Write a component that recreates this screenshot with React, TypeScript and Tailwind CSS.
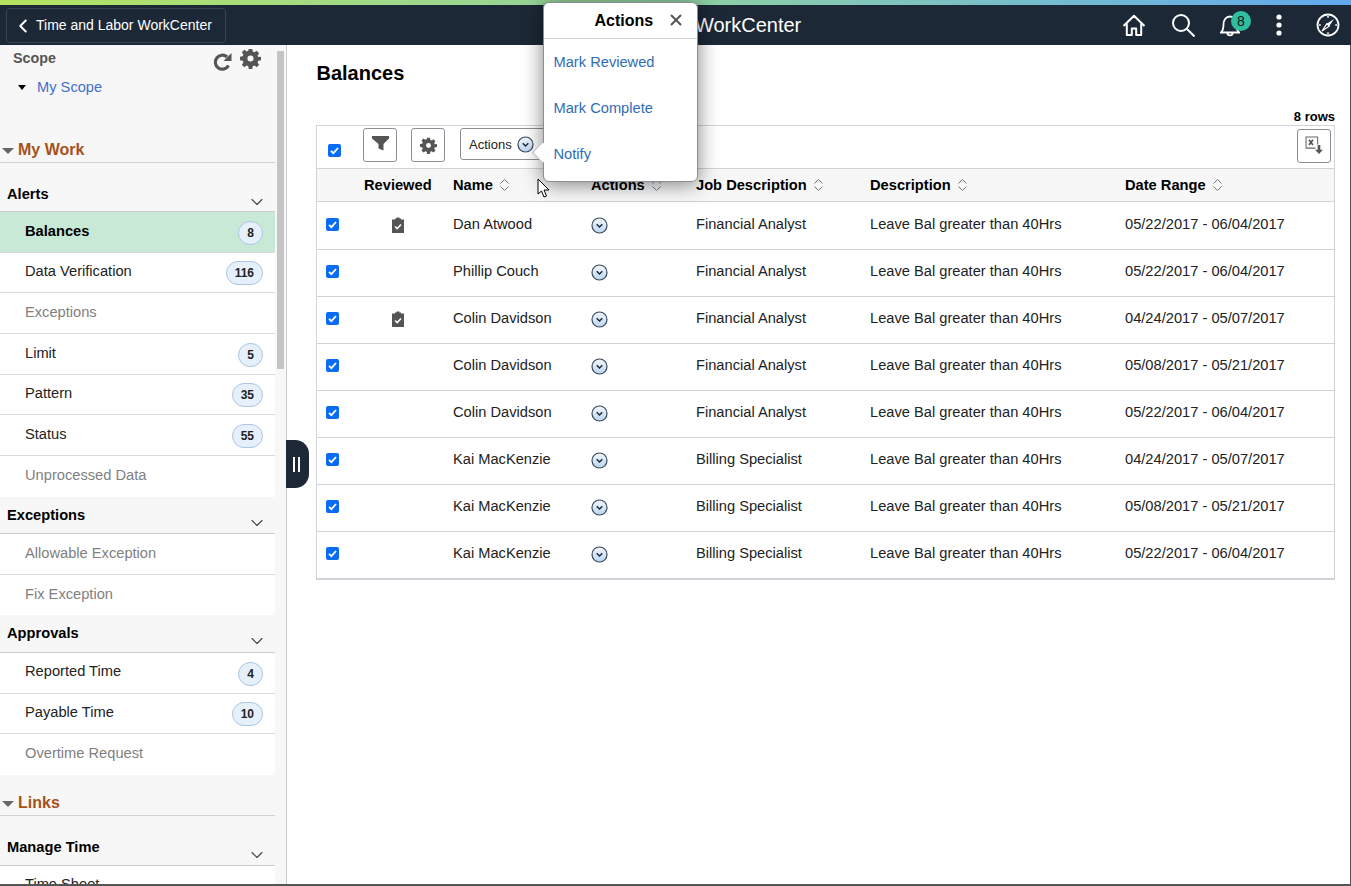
import { ChevronDown, ChevronLeft, X } from "lucide-react"

const font = "font-['Liberation_Sans',Arial,sans-serif]"

function Gear({ size = 20, color = "#555" }: { size?: number; color?: string }) {
  return (
    <svg width={size} height={size} viewBox="0 0 24 24">
      <path
        fill={color}
        fillRule="evenodd"
        d="M10 1h4l.6 3.100 1.900.8L19.100 3.100l2.800 2.800-1.800 2.600.8 1.900L24 10v4l-3.100.6-.8 1.900 1.800 2.600-2.800 2.800-2.600-1.800-1.900.8L14 24h-4l-.6-3.100-1.900-.8-2.600 1.800-2.800-2.800 1.800-2.600-.8-1.900L0 14v-4l3.100-.6.8-1.900-1.800-2.600L4.900 2.100l2.600 1.800 1.900-.8zM12 8.500a3.500 3.500 0 1 0 0 7 3.500 3.500 0 0 0 0-7z"
      />
    </svg>
  )
}

function ActionCircle() {
  return (
    <svg width="17" height="17" viewBox="0 0 17 17">
      <defs>
        <linearGradient id="ac" x1="0" y1="0" x2="0" y2="1">
          <stop offset="0" stopColor="#f4f8fd" />
          <stop offset="1" stopColor="#b9d5f2" />
        </linearGradient>
      </defs>
      <circle cx="8.500" cy="8.500" r="7.500" fill="url(#ac)" stroke="#3c4a5a" strokeWidth="1.200" />
      <path d="M5.700 7.300 8.500 10l2.800-2.700" fill="none" stroke="#1f2a36" strokeWidth="1.500" />
    </svg>
  )
}

function Check() {
  return (
    <span className="flex h-[13px] w-[13px] items-center justify-center rounded-[2px] bg-[#0a6cf5]">
      <svg width="11" height="11" viewBox="0 0 11 11">
        <path d="M2 5.800 4.400 8.200 9 3" fill="none" stroke="#fff" strokeWidth="1.800" />
      </svg>
    </span>
  )
}

function Sort() {
  return (
    <svg width="11" height="14" viewBox="0 0 11 14" className="ml-[6px]">
      <path d="M1.500 5.500 5.500 1.500l4 4M1.500 8.500l4 4 4-4" fill="none" stroke="#777" strokeWidth="1" />
    </svg>
  )
}

function Clipboard() {
  return (
    <svg width="14" height="16" viewBox="0 0 14 16">
      <path fill="#555" d="M1 2.500h3V1.500h1.500V.5h3v1H10v1h3V16H1z" />
      <path d="M4 9.500 6.200 11.600 10 7.400" fill="none" stroke="#fff" strokeWidth="1.500" />
    </svg>
  )
}

interface NavItem {
  label: string
  count?: string
  muted?: boolean
  active?: boolean
  last?: boolean
}

const alerts: NavItem[] = [
  { label: "Balances", count: "8", active: true },
  { label: "Data Verification", count: "116" },
  { label: "Exceptions", muted: true },
  { label: "Limit", count: "5" },
  { label: "Pattern", count: "35" },
  { label: "Status", count: "55" },
  { label: "Unprocessed Data", muted: true, last: true },
]
const exceptions: NavItem[] = [
  { label: "Allowable Exception", muted: true },
  { label: "Fix Exception", muted: true, last: true },
]
const approvals: NavItem[] = [
  { label: "Reported Time", count: "4" },
  { label: "Payable Time", count: "10" },
  { label: "Overtime Request", muted: true, last: true },
]

const rows = [
  ["Dan Atwood", "Financial Analyst", "05/22/2017 - 06/04/2017", true],
  ["Phillip Couch", "Financial Analyst", "05/22/2017 - 06/04/2017", false],
  ["Colin Davidson", "Financial Analyst", "04/24/2017 - 05/07/2017", true],
  ["Colin Davidson", "Financial Analyst", "05/08/2017 - 05/21/2017", false],
  ["Colin Davidson", "Financial Analyst", "05/22/2017 - 06/04/2017", false],
  ["Kai MacKenzie", "Billing Specialist", "04/24/2017 - 05/07/2017", false],
  ["Kai MacKenzie", "Billing Specialist", "05/08/2017 - 05/21/2017", false],
  ["Kai MacKenzie", "Billing Specialist", "05/22/2017 - 06/04/2017", false],
] as const

function Item({ item }: { item: NavItem }) {
  return (
    <div
      className={`flex h-[40.670px] items-center justify-between pl-[25px] pr-[12px] text-[14.670px] ${
        item.last ? "" : "border-b border-[#d8dbdf]"
      } ${item.active ? "bg-[#c8e9d6] font-bold text-black" : item.muted ? "bg-white text-[#7f7f7f]" : "bg-white text-[#222]"}`}
    >
      <span className="-mt-[2.500px]">{item.label}</span>
      {item.count && (
        <span className="mt-[2px] flex h-[24px] min-w-[25px] items-center justify-center rounded-full border border-[#a9c6e4] bg-[#e6f0fa] px-[8px] text-[12px] font-bold text-[#222]">
          {item.count}
        </span>
      )}
    </div>
  )
}

function GroupHeader({ label, className }: { label: string; className: string }) {
  return (
    <div className={`flex justify-between border-b border-[#c9cdd2] pl-[7px] pr-[8px] text-[14.670px] font-bold text-black ${className}`}>
      <span>{label}</span>
      <ChevronDown size={20} strokeWidth={1.300} className="mt-[9px] text-[#444]" />
    </div>
  )
}

function SectionTitle({ label }: { label: string }) {
  return (
    <div className="flex h-[25px] items-start border-b border-[#cfd3d8] pl-[2px] pt-[2px] text-[16px] font-bold leading-[20px] text-[#a5521b]">
      <span className="mr-[4px] mt-[8px] h-0 w-0 border-x-[6px] border-t-[6px] border-x-transparent border-t-[#666]" />
      {label}
    </div>
  )
}

export default function App() {
  return (
    <div className={`relative flex h-[886px] w-[1351px] flex-col overflow-hidden bg-white ${font}`}>
      <div className="h-[5px] bg-gradient-to-r from-[#b5e35f] via-[#8fd0a0] to-[#62a8ee]" />
      {/* banner */}
      <header className="relative flex h-[40px] items-center justify-between bg-[#1c2836] pl-[6px] pr-[11px] text-white">
        <button className="flex h-[35px] items-center rounded-[4px] border border-[#374554] pl-[7px] pr-[13px] pt-[1px] text-[14px]">
          <ChevronLeft size={22} strokeWidth={2.200} className="-ml-[2px] mr-[2px]" />
          Time and Labor WorkCenter
        </button>
        <div className="absolute left-[550px] top-[9px] text-[20px] leading-[23px]">Time and Labor WorkCenter</div>
        <div className="flex items-center">
          <svg width="24" height="24" viewBox="0 0 24 24" fill="none" stroke="#fff" strokeWidth="2" className="mr-[25px]">
            <path d="M1.500 13 12 2.800 22.500 13M4.800 10.500V22h5v-6.500h4.400V22h5V10.500" strokeLinejoin="round" />
          </svg>
          <svg width="24" height="24" viewBox="0 0 24 24" fill="none" stroke="#fff" strokeWidth="2" className="mr-[25px]">
            <circle cx="10" cy="10" r="8" />
            <path d="m16 16 7.500 7.500" />
          </svg>
          <div className="relative mr-[36px] h-[24px] w-[20px]">
            <svg width="20" height="24" viewBox="0 0 20 24" fill="none" stroke="#fff" strokeWidth="1.800">
              <path d="M1 19.500c2-2 2.500-4 2.500-8 0-4.500 2.500-8 6.500-8s6.500 3.500 6.500 8c0 4 .5 6 2.500 8zM7.500 20.500c0 2.500 5 2.500 5 0" />
            </svg>
            <span className="absolute -right-[11px] -top-[2px] flex h-[20px] w-[20px] items-center justify-center rounded-full bg-[#2fbf9f] text-[14px] text-[#111]">
              8
            </span>
          </div>
          <svg width="6" height="22" viewBox="0 0 6 22" fill="#fff" className="mr-[34px]">
            <circle cx="3" cy="3" r="2.600" />
            <circle cx="3" cy="11" r="2.600" />
            <circle cx="3" cy="19" r="2.600" />
          </svg>
          <svg width="24" height="24" viewBox="0 0 24 24" fill="none" stroke="#fff" strokeWidth="1.800">
            <circle cx="12" cy="12" r="10.500" />
            <path strokeWidth="1.500" d="M12 3v1.800M12 19.200V21M3 12h1.800M19.200 12H21" />
            <path fill="#fff" stroke="none" d="m18 6-4.800 7.200-2.400-2.400z" />
            <path strokeWidth="1.200" d="m6 18 4.800-7.200 2.400 2.400z" />
          </svg>
        </div>
      </header>

      <div className="flex flex-1 overflow-hidden">
        {/* left panel */}
        <aside className="flex w-[287px] shrink-0 border-r border-[#c9cdd2] bg-[#f7f7f7]">
          <div className="w-[275px] shrink-0">
            <div className="h-[93px] pl-[13px] pr-[14px] pt-[3px]">
              <div className="flex justify-between">
                <span className="text-[14.300px] font-bold text-[#555]">Scope</span>
                <div className="flex items-start gap-[8px]">
                  <svg width="19" height="20" viewBox="0 0 19 20" className="mt-[4px]" fill="none" stroke="#555" strokeWidth="3.200">
                    <path d="M15.500 13.500A7 7 0 1 1 14 5" />
                    <path fill="#555" stroke="none" d="M18.500 1v8h-8z" />
                  </svg>
                  <Gear size={21} />
                </div>
              </div>
              <div className="mt-[4px] flex items-center pl-[5px] text-[14.670px] text-[#3f6fd0]">
                <span className="mr-[11px] h-0 w-0 border-x-[4.500px] border-t-[5px] border-x-transparent border-t-black" />
                My Scope
              </div>
            </div>
            <SectionTitle label="My Work" />
            <GroupHeader label="Alerts" className="h-[49px] pt-[20px]" />
            {alerts.map((a) => (
              <Item key={a.label} item={a} />
            ))}
            <GroupHeader label="Exceptions" className="h-[37.500px] pt-[7px]" />
            {exceptions.map((a) => (
              <Item key={a.label} item={a} />
            ))}
            <GroupHeader label="Approvals" className="h-[37.500px] pt-[7px]" />
            {approvals.map((a) => (
              <Item key={a.label} item={a} />
            ))}
            <div className="h-[16px]" />
            <SectionTitle label="Links" />
            <GroupHeader label="Manage Time" className="h-[50px] pt-[20px]" />
            <div className="bg-white pl-[25px] pt-[7px] text-[14.670px] text-[#222]">Time Sheet</div>
          </div>
          <div className="ml-[2px] mt-[6px] h-[318px] w-[7px] bg-[#c4c4c4]" />
        </aside>

        {/* content */}
        <main className="flex-1 pl-[29px] pr-[16px]">
          <h1 className="ml-[0.500px] mt-[17px] text-[20px] font-bold leading-[23px] text-black">Balances</h1>
          <div className="mt-[23px] text-right text-[13px] font-bold leading-[17px] text-black">8 rows</div>
          <div className="border border-[#d0d3d7] text-[14.670px] text-[#222]">
            <div className="flex h-[43px] items-center justify-between border-b border-[#d0d3d7] pl-[11px] pr-[3px]">
              <div className="flex items-center">
                <span className="mt-[6px]">
                  <Check />
                </span>
                <button className="mb-[4px] ml-[22px] flex h-[34px] w-[34px] items-center justify-center rounded-[3px] border border-[#8a8f95]">
                  <svg width="17" height="15" viewBox="0 0 17 15" fill="#555" className="mb-[3px]">
                    <path d="M0 0h17v2.500L11.500 8v6.500l-5-2V8L0 2.500z" />
                  </svg>
                </button>
                <button className="mb-[4px] ml-[14px] flex h-[34px] w-[34px] items-center justify-center rounded-[3px] border border-[#8a8f95]">
                  <Gear size={17} />
                </button>
                <button className="mb-[6px] ml-[15px] flex h-[32px] w-[90px] items-center rounded-[3px] border border-[#8a8f95] pl-[8px] text-[13px]">
                  <span className="mt-[1px]">Actions</span>
                  <span className="ml-[5px] mt-[1px]">
                    <ActionCircle />
                  </span>
                </button>
              </div>
              <button className="mb-[2px] flex h-[34px] w-[34px] items-center justify-center rounded-[3px] border border-[#8a8f95]">
                <svg width="19" height="19" viewBox="0 0 18 18" fill="none" className="mb-[1px]">
                  <path d="M10 11.500H1V1h11v7" stroke="#666" strokeWidth="1" />
                  <path d="m3.800 3.500 3.700 5M7.500 3.500l-3.700 5" stroke="#555" strokeWidth="1.600" />
                  <path fill="#555" d="M12 8.500h2.500V13H17l-3.700 4-3.800-4H12z" />
                </svg>
              </button>
            </div>
            <div className="flex h-[33px] items-center border-b border-[#d0d3d7] bg-[#f7f7f7] font-bold text-black">
              <span className="ml-[47px] w-[89px]">Reviewed</span>
              <span className="flex w-[138px] items-center">Name<Sort /></span>
              <span className="flex w-[105px] items-center">Actions<Sort /></span>
              <span className="flex w-[174px] items-center">Job Description<Sort /></span>
              <span className="flex w-[255px] items-center">Description<Sort /></span>
              <span className="flex items-center">Date Range<Sort /></span>
            </div>
            {rows.map((r, i) => (
              <div key={i} className={`flex items-center border-b border-[#d0d3d7] ${i === 0 ? "h-[48px] pt-[1px]" : "h-[47px]"}`}>
                <span className="-mt-[3px] ml-[9px] w-[38px]">
                  <Check />
                </span>
                <span className="-mt-[2px] flex w-[89px] pl-[27px]">{r[3] && <Clipboard />}</span>
                <span className="-mt-[5px] w-[138px]">{r[0]}</span>
                <span className="-mt-[2px] w-[105px]">
                  <ActionCircle />
                </span>
                <span className="-mt-[5px] w-[174px]">{r[1]}</span>
                <span className="-mt-[5px] w-[255px]">Leave Bal greater than 40Hrs</span>
                <span className="-mt-[5px]">{r[2]}</span>
              </div>
            ))}
          </div>
        </main>
      </div>

      {/* panel collapse handle */}
      <div className="absolute left-[286px] top-[440px] flex h-[48px] w-[23px] items-center justify-center rounded-r-[14px] bg-[#1c2836]">
        <span className="mr-[2px] h-[15px] w-[7px] border-x-2 border-white" />
      </div>

      {/* actions popup */}
      <div className="absolute left-[542.500px] top-[2px] h-[180px] w-[155px] rounded-[6px] border border-[#8a8f95] bg-white shadow-[0_2px_20px_rgba(0,0,0,0.5)]">
        <span className="absolute -left-[9px] top-[141.500px] h-[15px] w-[15px] rotate-45 border-b border-l border-[#b5b8bc] bg-white" />
        <div className="relative flex h-[36px] items-center border-b border-[#d0d3d7] pl-[51px] text-[16px] font-bold text-black">
          Actions
          <X size={18} strokeWidth={2.500} className="-mt-[1px] ml-[14px] text-[#555]" />
        </div>
        <div className="relative flex flex-col pl-[10px] text-[14.670px] text-[#2f6db5]">
          <a className="flex h-[46px] items-center">Mark Reviewed</a>
          <a className="flex h-[46px] items-center">Mark Complete</a>
          <a className="flex h-[46px] items-center">Notify</a>
        </div>
      </div>

      {/* mouse cursor */}
      <svg width="14" height="21" viewBox="0 0 14 21" className="absolute left-[537px] top-[178px]">
        <path d="M1 1v15l3.500-3 2.500 6 2.500-1-2.500-6H12z" fill="#fff" stroke="#000" strokeWidth="1" />
      </svg>

      {/* window edge */}
      <div className="absolute bottom-0 left-0 h-[2px] w-full bg-[#555]" />
      <div className="absolute right-0 top-[45px] h-full w-[1px] bg-[#555]" />
    </div>
  )
}
